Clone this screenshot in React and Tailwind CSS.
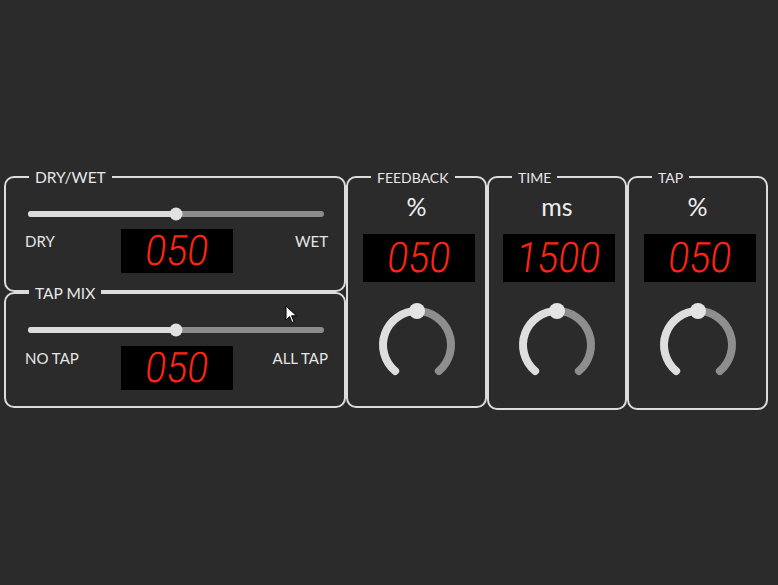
import React from 'react';

const Title = ({ children, size = 'text-[14px]' }) => (
  <span className={`absolute -top-[8px] left-[23px] bg-[#2b2b2b] px-[6px] leading-[15px] text-[#e8e8e8] ${size}`}>
    {children}
  </span>
);

const Digits = ({ value, className = '' }) => (
  <div className={`flex items-center justify-center bg-black ${className}`}>
    <span className="inline-block font-[Roboto,sans-serif] text-[42px] font-light leading-none text-[#ff2410] scale-x-90 -skew-x-8">
      {value}
    </span>
  </div>
);

const Slider = () => (
  <div className="relative ml-[22px] mr-[20px] mt-[33px] h-[6px] rounded-full bg-[#8c8c8c]">
    <div className="h-full w-1/2 rounded-full bg-[#dcdcdc]" />
    <div className="absolute left-1/2 top-1/2 h-[13px] w-[13px] -translate-x-1/2 -translate-y-1/2 rounded-full bg-[#e2e2e2]" />
  </div>
);

const MixPanel = ({ title, left, right, gap }) => (
  <div className="relative h-[116px] rounded-[10px] border-2 border-[#dcdcdc]">
    <Title size="text-[15.5px]">{title}</Title>
    <Slider />
    <div className={`grid grid-cols-[1fr_112px_1fr] pl-[19px] pr-[16px] ${gap}`}>
      <span className="pt-[3px] text-[15px] leading-[18px] text-[#e6e6e6]">{left}</span>
      <Digits value="050" className="h-[44px]" />
      <span className="pt-[3px] text-right text-[15px] leading-[18px] text-[#e6e6e6]">{right}</span>
    </div>
  </div>
);

const Knob = () => (
  <svg width="90" height="90" viewBox="0 0 90 90" className="mt-[18px]">
    <path d="M 23.15 71.04 A 34 34 0 0 1 45 11" fill="none" stroke="#dedede" strokeWidth="8" strokeLinecap="round" />
    <path d="M 45 11 A 34 34 0 0 1 66.85 71.04" fill="none" stroke="#8e8e8e" strokeWidth="8" strokeLinecap="round" />
    <circle cx="45" cy="11" r="8" fill="#e4e4e4" />
  </svg>
);

const KnobPanel = ({ title, unit, value, width, height }) => (
  <div className={`relative flex flex-col items-center rounded-[10px] border-2 border-[#dcdcdc] pt-[13px] ${width} ${height}`}>
    <Title>{title}</Title>
    <div className="h-[30px] text-[25px] leading-[30px] text-[#eeeeee]">{unit}</div>
    <Digits value={value} className="ml-[4px] mt-[13px] h-[48px] w-[112px]" />
    <Knob />
  </div>
);

export default function App() {
  return (
    <div className="relative h-[585px] w-[778px] overflow-hidden bg-[#2b2b2b] font-[Lato,sans-serif]">
      <div className="flex items-start pl-[4px] pt-[176px]">
        <div className="flex w-[342px] flex-col">
          <MixPanel title="DRY/WET" left="DRY" right="WET" gap="mt-[12px]" />
          <MixPanel title="TAP MIX" left="NO TAP" right="ALL TAP" gap="mt-[13px]" />
        </div>
        <KnobPanel title="FEEDBACK" unit="%" value="050" width="w-[141px]" height="h-[232px]" />
        <KnobPanel title="TIME" unit="ms" value="1500" width="w-[140px]" height="h-[234px]" />
        <KnobPanel title="TAP" unit="%" value="050" width="w-[141px]" height="h-[234px]" />
      </div>
      <svg width="14" height="20" viewBox="0 0 14 20" className="absolute left-[285px] top-[305px]">
        <path d="M1 1 L1 15 L4.5 11.5 L7 17.5 L9 16.6 L6.6 10.8 L11.5 10.8 Z" fill="#ffffff" stroke="#000000" strokeWidth="1" strokeLinejoin="round" />
      </svg>
    </div>
  );
}
